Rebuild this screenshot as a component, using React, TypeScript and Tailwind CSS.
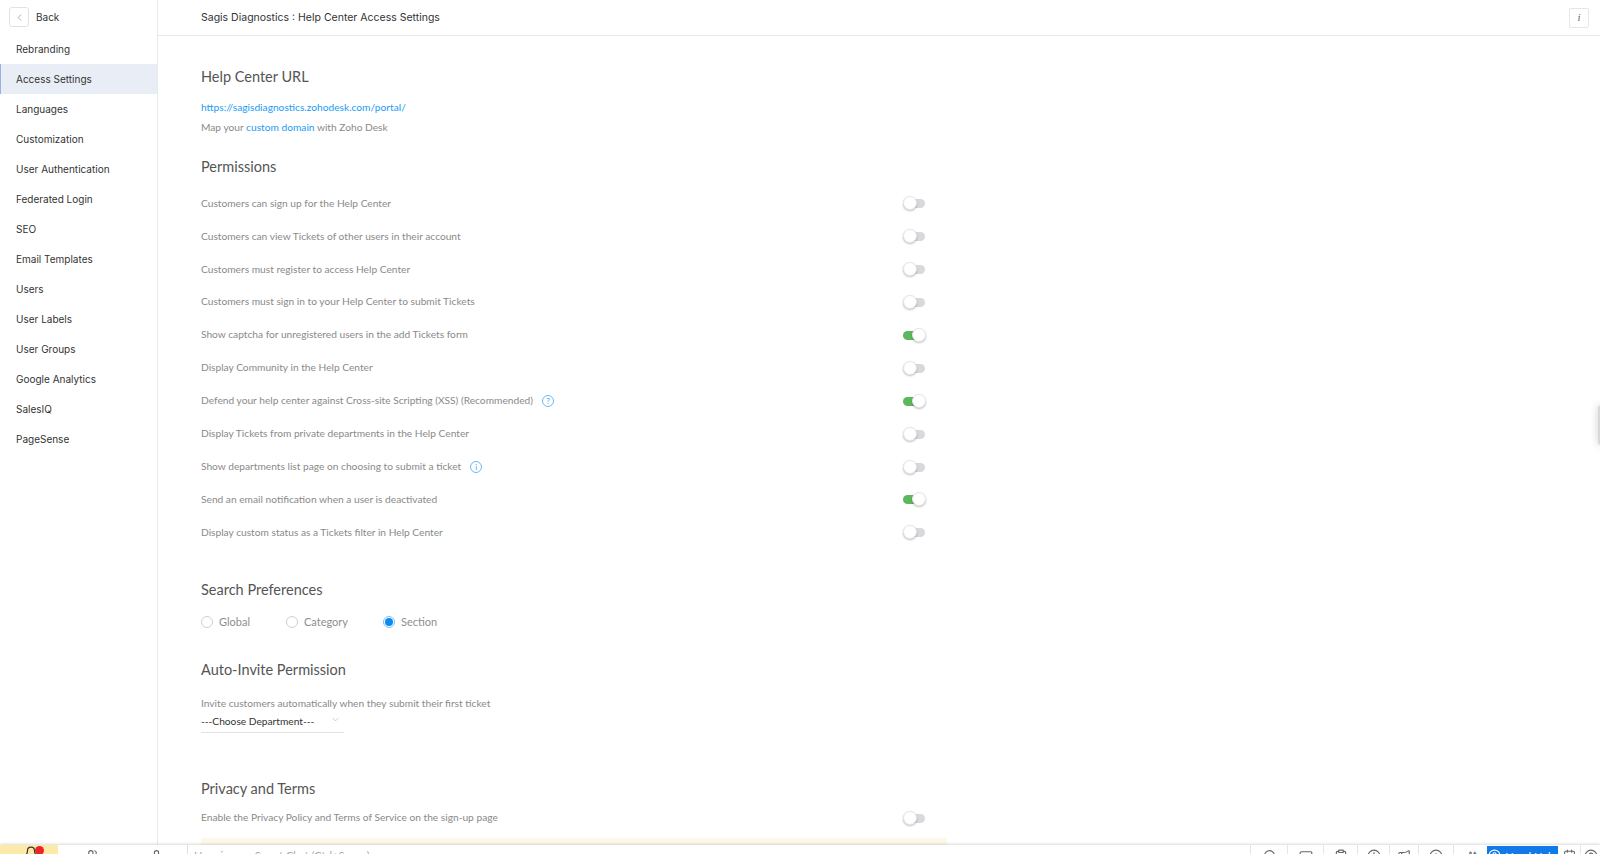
import { ChevronLeft, ChevronDown, Bell, Users, User, Monitor, Calendar, Clock, Megaphone, Info, Sparkles, HelpCircle, Clipboard, Headphones } from 'lucide-react'

const navItems = ['Rebranding', 'Access Settings', 'Languages', 'Customization', 'User Authentication', 'Federated Login', 'SEO', 'Email Templates', 'Users', 'User Labels', 'User Groups', 'Google Analytics', 'SalesIQ', 'PageSense']

const permissions: { label: string; on?: boolean; hint?: '?' | 'i' }[] = [
  { label: 'Customers can sign up for the Help Center' },
  { label: 'Customers can view Tickets of other users in their account' },
  { label: 'Customers must register to access Help Center' },
  { label: 'Customers must sign in to your Help Center to submit Tickets' },
  { label: 'Show captcha for unregistered users in the add Tickets form', on: true },
  { label: 'Display Community in the Help Center' },
  { label: 'Defend your help center against Cross-site Scripting (XSS) (Recommended)', on: true, hint: '?' },
  { label: 'Display Tickets from private departments in the Help Center' },
  { label: 'Show departments list page on choosing to submit a ticket', hint: 'i' },
  { label: 'Send an email notification when a user is deactivated', on: true },
  { label: 'Display custom status as a Tickets filter in Help Center' },
]

function Toggle({ on }: { on?: boolean }) {
  return (
    <div className="relative h-[16px] w-[24px]">
      <div className={`absolute left-0 top-[4px] h-[9px] w-[22px] rounded-full ${on ? 'bg-[#5cb85c]' : 'bg-[#d8d9dd]'}`} />
      <div className={`absolute top-[1px] h-[14px] w-[14px] rounded-full border border-[#e8e8e8] bg-white shadow-[0_1px_2px_rgba(0,0,0,0.25)] ${on ? 'left-[9px]' : 'left-0'}`} />
    </div>
  )
}

function Radio({ label, checked, className }: { label: string; checked?: boolean; className: string }) {
  return (
    <div className={`flex items-center ${className}`}>
      <span className={`flex h-[12px] w-[12px] items-center justify-center rounded-full border ${checked ? 'border-[#7cc0fb]' : 'border-[#cfcfcf]'}`}>
        {checked && <span className="h-[8px] w-[8px] rounded-full bg-[#0a8cf0]" />}
      </span>
      <span className="ml-[6px] text-[11px] text-[#8e8e8e]">{label}</span>
    </div>
  )
}

function Heading({ children, className }: { children: string; className: string }) {
  return <h2 className={`text-[14.5px] leading-[20px] text-[#555] ${className}`}>{children}</h2>
}

export default function App() {
  return (
    <div className="relative flex h-[854px] w-[1600px] flex-col overflow-hidden bg-white font-['Lato',sans-serif]">
      <div className="flex min-h-0 flex-1">
        {/* Sidebar */}
        <aside className="w-[158px] shrink-0 border-r border-[#e6ebf0] font-['Inter',sans-serif] text-[10px] text-[#333]">
          <div className="flex h-[34px] items-center pl-[9px]">
            <span className="flex h-[20px] w-[20px] items-center justify-center rounded-[3px] border border-[#e2e2e2]">
              <ChevronLeft size={11} strokeWidth={1.2} className="text-[#666]" />
            </span>
            <span className="ml-[7px]">Back</span>
          </div>
          <ul>
            {navItems.map(item => (
              <li
                key={item}
                className={`flex h-[30px] items-center ${item === 'Access Settings' ? 'border-l border-[#9fb0e0] bg-[#e9eef6] pl-[15px]' : 'pl-[16px]'}`}
              >
                {item}
              </li>
            ))}
          </ul>
        </aside>

        <main className="min-w-0 flex-1">
          {/* Top bar */}
          <div className="flex h-[36px] items-center justify-between border-b border-[#e8e8e8] pl-[43px] pr-[11px]">
            <span className="pt-[1px] font-['Inter',sans-serif] text-[10.5px] text-[#333]">Sagis Diagnostics : Help Center Access Settings</span>
            <span className="flex h-[20px] w-[20px] items-center justify-center rounded-[2px] border border-[#e6e6e6] font-['Liberation_Serif',serif] text-[11px] italic text-[#666]">i</span>
          </div>

          <div className="pl-[43px]">
            <Heading className="mt-[31px]">Help Center URL</Heading>
            <div className="mt-[10px] text-[10.2px] leading-[20px] text-[#1a9cf5]">https://sagisdiagnostics.zohodesk.com/portal/</div>
            <div className="text-[10.2px] leading-[20px] text-[#8a8a8a]">
              Map your <span className="text-[#1a9cf5]">custom domain</span> with Zoho Desk
            </div>

            <Heading className="mt-[20px]">Permissions</Heading>

            <div className="mt-[10px] w-[715px]">
              {permissions.map(p => (
                <div key={p.label} className="flex h-[32.9px] items-center justify-between text-[10.2px] text-[#8a8a8a]">
                  <div className="flex items-center">
                    <span>{p.label}</span>
                    {p.hint && (
                      <span className="ml-[9px] flex h-[12px] w-[12px] items-center justify-center rounded-full border border-[#6bb8f5] text-[8px] text-[#3a9be8]">{p.hint}</span>
                    )}
                  </div>
                  <div className="mr-[-11px]">
                    <Toggle on={p.on} />
                  </div>
                </div>
              ))}
            </div>

            <Heading className="mt-[31px]">Search Preferences</Heading>
            <div className="mt-[13px] flex h-[18px] items-center">
              <Radio label="Global" className="w-[85px]" />
              <Radio label="Category" className="w-[97px]" />
              <Radio label="Section" checked className="" />
            </div>

            <Heading className="mt-[29px]">Auto-Invite Permission</Heading>
            <div className="mt-[15px] text-[10.2px] leading-[16px] text-[#8a8a8a]">Invite customers automatically when they submit their first ticket</div>
            <div className="flex h-[22px] w-[143px] items-center justify-between border-b border-[#e2e2e2] text-[10.2px] text-[#333]">
              <span>---Choose Department---</span>
              <ChevronDown size={11} strokeWidth={1} className="mb-[3px] mr-[3px] text-[#999]" />
            </div>

            <Heading className="mt-[46px]">Privacy and Terms</Heading>
            <div className="mt-[9px] flex h-[20px] w-[715px] items-center justify-between text-[10.2px] text-[#8a8a8a]">
              <span>Enable the Privacy Policy and Terms of Service on the sign-up page</span>
              <div className="mr-[-11px]">
                <Toggle />
              </div>
            </div>
            <div className="mt-[10px] h-[30px] w-[746px] bg-[#fdf8ea]" />
          </div>
        </main>
      </div>

      {/* Bottom bar, cut off by the window */}
      <footer className="relative z-10 flex h-[9px] shrink-0 overflow-hidden bg-white text-[#666] shadow-[0_-1px_3px_rgba(0,0,0,0.15)]">
        <div className="flex h-[30px] w-[58px] justify-center bg-[#fde9a8] pl-[4px] pt-[1px] text-[#333]">
          <span className="relative">
            <Bell size={14} />
            <span className="absolute right-[-6px] top-0 h-[9px] w-[9px] rounded-full bg-[#e8262a]" />
          </span>
        </div>
        <div className="flex w-[68px] justify-center pt-[4px]"><Users size={13} /></div>
        <div className="flex w-[61px] justify-center pt-[4px]"><User size={13} /></div>
        <div className="flex-1 border-l border-[#dfdfdf] pl-[6px] pt-[3px] text-[11px] text-[#aaa]">Here is your Smart Chat (Ctrl+Space)</div>
        <div className="flex w-[37px] justify-center border-l border-[#e6e6e6] pt-[4px]"><Headphones size={13} /></div>
        <div className="flex w-[36px] justify-center border-l border-[#e6e6e6] pt-[5px]"><Monitor size={14} /></div>
        <div className="flex w-[34px] justify-center border-l border-[#e6e6e6] pt-[4px]"><Clipboard size={14} /></div>
        <div className="flex w-[32px] justify-center border-l border-[#e6e6e6] pt-[4px]"><Clock size={14} /></div>
        <div className="flex w-[29px] justify-center border-l border-[#e6e6e6] pt-[4px]"><Megaphone size={14} /></div>
        <div className="flex w-[35px] justify-center border-l border-[#e6e6e6] pt-[4px]"><Info size={14} /></div>
        <div className="flex w-[34px] justify-center border-l border-[#e6e6e6] pt-[6px]"><Sparkles size={13} /></div>
        <div className="mt-[1px] flex h-[30px] w-[71px] justify-center gap-[4px] bg-[#1279e8] pt-[3px] text-[11px] text-white">
          <HelpCircle size={13} />
          <span>Need Help</span>
        </div>
        <div className="flex w-[22px] justify-center pt-[4px]"><Calendar size={13} /></div>
        <div className="flex w-[20px] shrink-0 justify-center border-l border-[#e6e6e6] pt-[4px]"><HelpCircle size={14} /></div>
      </footer>

      {/* Edge handle peeking in from the right */}
      <div className="absolute right-[-5px] top-[405px] h-[40px] w-[7px] rounded-full bg-[#d8d8d8] shadow-[0_0_8px_rgba(0,0,0,0.2)]" />
    </div>
  )
}
